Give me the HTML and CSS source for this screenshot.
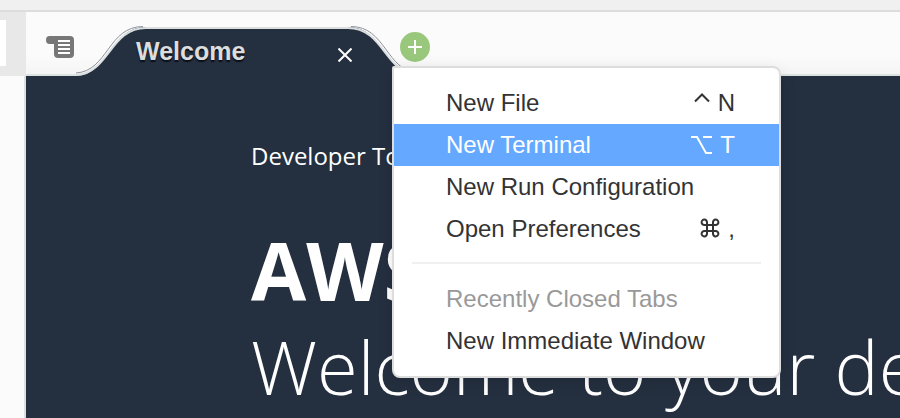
FILE: index.html
```html
<!DOCTYPE html>
<html lang="en">
<head>
<meta charset="utf-8">
<title>Welcome</title>
<link rel="stylesheet" href="styles.css">
</head>
<body>
<div class="app">
  <header class="topbar"></header>
  <div class="workspace">
    <aside class="sidebar">
      <div class="sidebar-head"><div class="sidebar-tab"></div></div>
      <div class="sidebar-body"></div>
    </aside>
    <main class="editor">
      <div class="tabbar">
        <button class="icon-button list-button" aria-label="Tab list">
          <svg width="28" height="22" viewBox="0 0 28 22">
            <path fill="#777" d="M3.500 0H24Q28 0 28 4V18Q28 22 24 22H12Q8 22 8 18V8H3.500Q0 8 0 4Q0 0 3.500 0Z"/>
            <path stroke="#fff" stroke-width="2" d="M12 5H24M12 9H24M12 13H24M12 17H24"/>
          </svg>
        </button>
        <div class="tab">
          <svg class="tab-shape" width="342" height="50" viewBox="0 0 342 50">
            <path fill="#242f3f" d="M0 50C32 50 34 1 70 1H272C308 1 310 50 342 50Z"/>
            <path fill="none" stroke="#8b929c" d="M0 47C32 45 32 .5 67 .5M275 .5C310 .5 310 45 342 47"/>
            <path fill="none" stroke="#dcdfe0" stroke-width="2" d="M0 49C33 48 34 2 70 2H272C308 2 309 48 342 49"/>
          </svg>
          <span class="tab-title">Welcome</span>
          <button class="icon-button" aria-label="Close">
            <svg width="14" height="14" viewBox="0 0 14 14"><path stroke="#fff" stroke-width="2" d="M.5 .5L13.500 13.500M13.500 .5L.5 13.500"/></svg>
          </button>
        </div>
        <div class="add">
          <button class="icon-button" aria-label="New">
            <svg width="30" height="30" viewBox="0 0 30 30"><circle cx="15" cy="15" r="15" fill="#99c77b"/><path stroke="#fff" stroke-width="2" d="M8 15H22M15 8V22"/></svg>
          </button>
          <div class="menu" role="menu">
            <button class="item" role="menuitem"><span>New File</span><span class="keys"><svg width="16" height="22" viewBox="0 0 16 22"><path fill="none" stroke="#333" stroke-width="2" d="M1 9.500L8 2.500L15 9.500"/></svg>N</span></button>
            <button class="item selected" role="menuitem"><span>New Terminal</span><span class="keys"><svg width="21" height="22" viewBox="0 0 21 22"><path fill="none" stroke="#fff" stroke-width="2" d="M0 3H6L15 19H21M12 3H21"/></svg>T</span></button>
            <button class="item" role="menuitem"><span>New Run Configuration</span></button>
            <button class="item" role="menuitem"><span>Open Preferences</span><span class="keys"><svg width="20" height="22" viewBox="0 0 20 22"><path fill="none" stroke="#333" stroke-width="2" d="M7 7V4.500A2.700 2.700 0 1 0 4.500 7H15.500A2.700 2.700 0 1 0 13 4.500V15.500A2.700 2.700 0 1 0 15.500 13H4.500A2.700 2.700 0 1 0 7 15.500Z"/></svg>,</span></button>
            <hr>
            <button class="item" role="menuitem" disabled><span>Recently Closed Tabs</span></button>
            <button class="item" role="menuitem"><span>New Immediate Window</span></button>
          </div>
        </div>
      </div>
      <section class="welcome">
        <p>Developer Tools</p>
        <h1>AWS</h1>
        <h2>Welcome to your de</h2>
      </section>
    </main>
  </div>
</div>
</body>
</html>
```
FILE: styles.css
```css
* { box-sizing: border-box; }
body { margin: 0; font-family: "Liberation Sans", sans-serif; font-size: 24px; }
.app { height: 100vh; display: flex; flex-direction: column; overflow: hidden; }
.topbar { flex: 0 0 12px; background: #f0f0f0; border-bottom: 2px solid #ddd; }
.workspace { flex: 1; display: flex; min-height: 0; }
.sidebar { flex: 0 0 26px; display: flex; flex-direction: column; }
.sidebar-head { height: 64px; padding: 8px 20px 10px 0; background: #e8e8e8; }
.sidebar-tab { height: 100%; background: #fff; }
.sidebar-body { flex: 1; background: #fbfbfb; border-right: 2px solid #dde0e0; }
.editor { flex: 1; min-width: 0; display: flex; flex-direction: column; }
.tabbar {
  flex: 0 0 64px; display: flex; align-items: flex-end; padding-left: 20px;
  background: linear-gradient(#fbfbfb 70%, #f5f5f5);
  border-bottom: 2px solid #dce1e1;
}
.icon-button { padding: 0; border: 0; background: none; display: block; }
.icon-button svg, .keys svg, .tab-shape { display: block; }
.list-button { margin-bottom: 16px; }
.tab {
  position: relative; width: 342px; height: 50px; margin: 0 -18px -2px 2px;
  padding: 0 66px 0 60px; display: flex; align-items: center; justify-content: space-between;
}
.tab .icon-button { position: relative; margin-top: 8px; }
.tab-shape { position: absolute; inset: 0; }
.tab-title { position: relative; color: #ddd; font-size: 25px; font-weight: bold; text-shadow: 0 2px 1px #0b111a; }
.add { position: relative; align-self: flex-start; margin-top: 20px; }
.menu {
  position: absolute; z-index: 2; top: 34px; left: -8px; width: 389px; padding: 14px 0;
  background: #fff; border: 2px solid #ddd; border-radius: 2px 8px 8px 8px;
  box-shadow: 0 4px 16px #0000001a;
}
.item {
  width: 100%; height: 42px; padding: 0 44px 0 52px; border: 0; background: none;
  display: flex; align-items: center; justify-content: space-between;
  font: inherit; color: #333; text-align: left;
}
.item.selected { background: #64a9ff; color: #fff; }
.item:disabled { color: #999; }
.keys { display: flex; align-items: center; gap: 8px; }
.menu hr { height: 2px; margin: 12px 18px 14px; border: 0; background: #f0f0f0; }
.welcome {
  flex: 1; padding: 62px 0 0 225px; overflow: hidden; white-space: nowrap;
  background: #242f3f; color: #fff; font-family: "Open Sans", sans-serif;
}
.welcome p { margin: 0; font-size: 24px; line-height: 36px; }
.welcome h1 { margin: 48px 0 0; font-size: 80px; line-height: 96px; font-weight: 700; }
.welcome h2 { margin: 0; font-size: 74px; line-height: 98px; font-weight: 300; }
```
